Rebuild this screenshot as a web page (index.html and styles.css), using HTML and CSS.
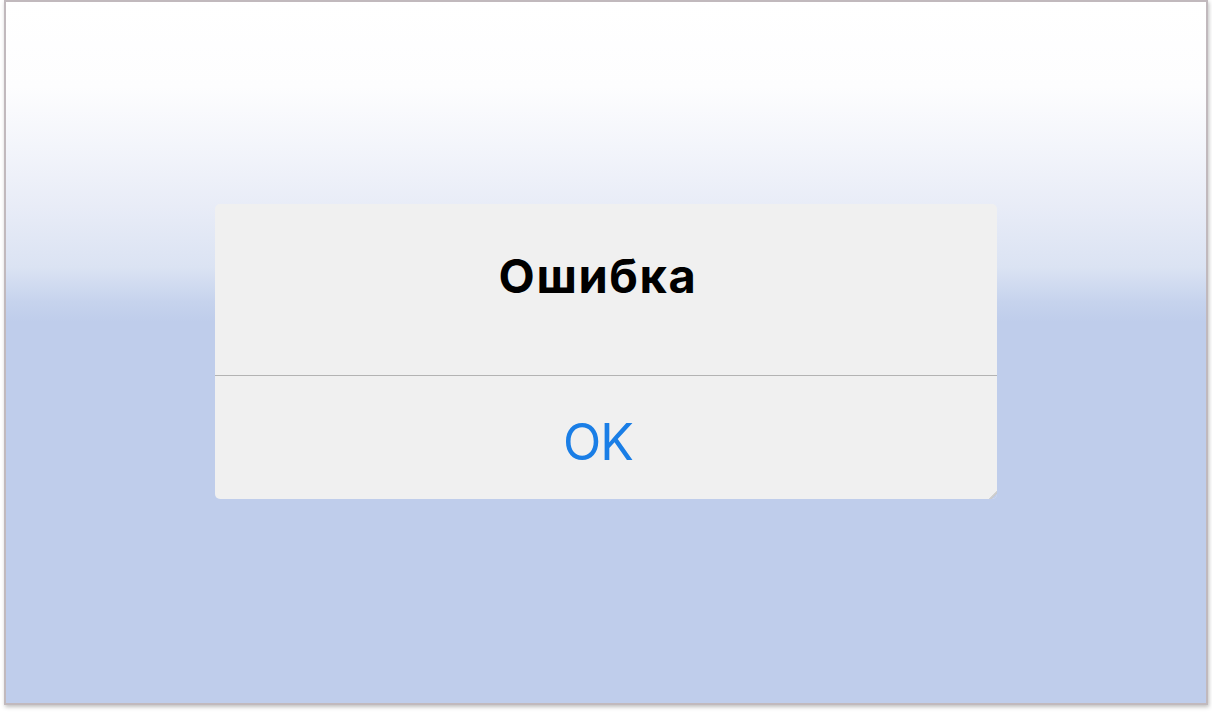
FILE: index.html
```html
<!DOCTYPE html>
<html lang="ru">
<head>
<meta charset="utf-8">
<title>Ошибка</title>
<link rel="stylesheet" href="styles.css">
</head>
<body>
<div class="frame">
  <div class="screen">
    <div class="alert">
      <div class="alert-title">Ошибка</div>
      <div class="alert-button">OK</div>
    </div>
  </div>
</div>
</body>
</html>
```
FILE: styles.css
```css
html, body {
  margin: 0;
  padding: 0;
  background: #ffffff;
  width: 1212px;
  height: 712px;
  overflow: hidden;
}

.frame {
  margin-left: 4px;
  width: 1204px;
  height: 705px;
  box-sizing: border-box;
  border: 2px solid #c1b9bd;
  box-shadow: 1px 2px 4px rgba(0, 0, 0, 0.25);
}

.screen {
  width: 100%;
  height: 100%;
  box-sizing: border-box;
  padding-top: 202px;
  padding-left: 209px;
  background: linear-gradient(180deg,
    #ffffff 0px,
    #fdfdfe 85px,
    #f3f5fb 145px,
    #e8ecf7 205px,
    #dbe3f3 265px,
    #c6d3ed 300px,
    #bfcdeb 320px,
    #bfcdeb 100%);
}

.alert {
  width: 782px;
  height: 295px;
  background: #f0f0f0;
  border-radius: 5px;
  display: flex;
  flex-direction: column;
  position: relative;
}

.alert::after {
  content: "";
  position: absolute;
  right: 0;
  bottom: 0;
  width: 9px;
  height: 9px;
  background: linear-gradient(135deg, transparent 50%, #d6d6d6 50%, #c8c8c8 70%, #bfcdeb 70%);
  border-bottom-right-radius: 5px;
}

.alert-title {
  height: 172px;
  box-sizing: border-box;
  border-bottom: 1px solid #b3b3b3;
  padding-top: 48px;
  padding-right: 16px;
  text-align: center;
  font-family: Inter, "Liberation Sans", sans-serif;
  font-size: 47px;
  font-weight: 700;
  line-height: 47px;
  color: #000000;
  letter-spacing: 1.6px;
}

.alert-button {
  flex: 1;
  box-sizing: border-box;
  padding-top: 41px;
  padding-right: 16px;
  text-align: center;
  font-family: Inter, "Liberation Sans", sans-serif;
  font-size: 50px;
  line-height: 50px;
  letter-spacing: -1px;
  color: #1a7ee6;
}
```
